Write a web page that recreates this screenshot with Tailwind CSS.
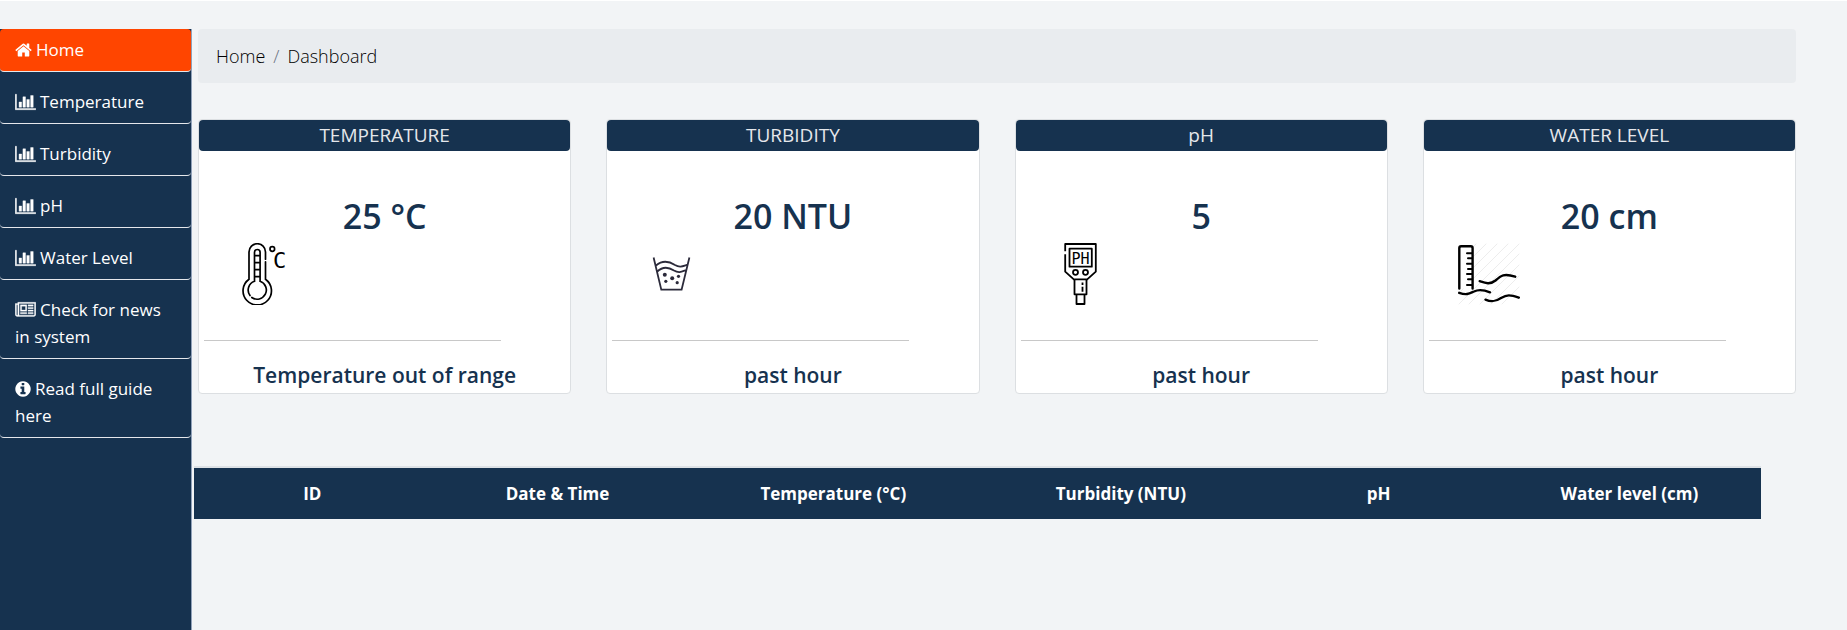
<!DOCTYPE html>
<html lang="en">
<head>
<meta charset="utf-8">
<meta name="viewport" content="width=device-width, initial-scale=1">
<title>Dashboard</title>
<script src="https://cdn.jsdelivr.net/npm/@tailwindcss/browser@4"></script>
</head>
<body class="min-h-screen flex flex-col border-t border-white bg-[#f2f4f6] pt-7 font-['Open_Sans',sans-serif] text-[17px]">

<svg class="hidden" aria-hidden="true">
  <symbol id="bars" viewBox="0 0 2048 1792"><path stroke="currentColor" stroke-width="40" d="M640 896v512h-256v-512h256zm384-512v1024h-256v-1024h256zm1024 1152v128h-2048v-1536h128v1408h1920zm-640-896v768h-256v-768h256zm384-384v1152h-256v-1152h256z"/></symbol>
</svg>

<div class="flex flex-1">
  <nav class="w-48 shrink-0 border-r border-slate-400 bg-[#16324f] text-white" aria-label="Main">
    <ul class="flex flex-col gap-[9px] leading-[27px]">
      <li><a href="#" aria-current="page" class="block rounded border-b border-gray-200 bg-[#ff4500] pt-[7px] pb-2 pl-[15px] pr-3"><svg class="mr-1 mb-0.5 inline h-[18px] w-[17px] align-text-bottom fill-current" viewBox="0 0 1664 1792" aria-hidden="true"><path d="M1408 992v480q0 26-19 45t-45 19h-384v-384h-256v384h-384q-26 0-45-19t-19-45v-480q0-1 .5-3t.5-3l575-474 575 474q1 2 1 6zm223-69l-62 74q-8 9-21 11h-3q-13 0-21-7l-692-577-692 577q-12 8-24 7-13-2-21-11l-62-74q-8-10-7-23.500t11-21.500l719-599q32-26 76-26t76 26l244 204v-195q0-14 9-23t23-9h192q14 0 23 9t9 23v408l219 182q10 8 11 21.500t-7 23.500z"/></svg>Home</a></li>
      <li><a href="#" class="block rounded border-b border-gray-200 pt-[7px] pb-2 pl-[15px] pr-3"><svg class="mr-1 mb-0.5 inline h-[18px] w-[21px] align-text-bottom fill-current" aria-hidden="true"><use href="#bars"/></svg>Temperature</a></li>
      <li><a href="#" class="block rounded border-b border-gray-200 pt-[7px] pb-2 pl-[15px] pr-3"><svg class="mr-1 mb-0.5 inline h-[18px] w-[21px] align-text-bottom fill-current" aria-hidden="true"><use href="#bars"/></svg>Turbidity</a></li>
      <li><a href="#" class="block rounded border-b border-gray-200 pt-[7px] pb-2 pl-[15px] pr-3"><svg class="mr-1 mb-0.5 inline h-[18px] w-[21px] align-text-bottom fill-current" aria-hidden="true"><use href="#bars"/></svg>pH</a></li>
      <li><a href="#" class="block rounded border-b border-gray-200 pt-[7px] pb-2 pl-[15px] pr-3"><svg class="mr-1 mb-0.5 inline h-[18px] w-[21px] align-text-bottom fill-current" aria-hidden="true"><use href="#bars"/></svg>Water Level</a></li>
      <li><a href="#" class="block rounded border-b border-gray-200 pt-[7px] pb-2 pl-[15px] pr-3"><svg class="mr-1 mb-0.5 inline h-[18px] w-[21px] align-text-bottom fill-current" viewBox="0 0 2048 1792" aria-hidden="true"><path stroke="currentColor" stroke-width="30" d="M1024 512h-384v384h384v-384zm128 640v128h-640v-128h640zm0-768v640h-640v-640h640zm640 768v128h-512v-128h512zm0-256v128h-512v-128h512zm0-256v128h-512v-128h512zm0-256v128h-512v-128h512zm-1536 960v-960h-128v960q0 26 19 45t45 19 45-19 19-45zm1664 0v-1088h-1536v1088q0 33-11 64h1483q26 0 45-19t19-45zm128-1216v1216q0 80-56 136t-136 56h-1664q-80 0-136-56t-56-136v-1088h256v-128h1792z"/></svg>Check for news in system</a></li>
      <li><a href="#" class="block rounded border-b border-gray-200 pt-[7px] pb-2 pl-[15px] pr-3"><svg class="mr-1 mb-0.5 inline h-[18px] w-4 align-text-bottom fill-current" viewBox="0 0 1536 1792" aria-hidden="true"><path d="M1024 1376v-160q0-14-9-23t-23-9h-96v-512q0-14-9-23t-23-9h-320q-14 0-23 9t-9 23v160q0 14 9 23t23 9h96v320h-96q-14 0-23 9t-9 23v160q0 14 9 23t23 9h448q14 0 23-9t9-23zm-128-896v-160q0-14-9-23t-23-9h-192q-14 0-23 9t-9 23v160q0 14 9 23t23 9h192q14 0 23-9t9-23zm640 416q0 209-103 385.500t-279.500 279.500-385.500 103-385.500-103-279.500-279.500-103-385.500 103-385.500 279.500-279.500 385.500-103 385.500 103 279.500 279.500 103 385.500z"/></svg>Read full guide here</a></li>
    </ul>
  </nav>

  <main class="min-w-0 flex-1 pl-0.5 pr-[51px]">
    <nav class="ml-1 rounded bg-[#e9ecef] px-[18px] py-[13px] text-[18px] font-light leading-7" aria-label="Breadcrumb">
      <ol class="flex gap-2 text-black">
        <li><a href="#">Home</a></li>
        <li class="text-gray-500" aria-hidden="true">/</li>
        <li><a href="#">Dashboard</a></li>
      </ol>
    </nav>

    <div class="ml-1 mt-9 grid grid-cols-4 gap-[35px] text-center text-[#16324f]">
      <section class="rounded border border-[#dcdfe2] bg-white">
        <h2 class="rounded bg-[#16324f] text-[19px] leading-[31px] text-gray-200">TEMPERATURE</h2>
        <p class="mt-[45px] text-[34px] font-semibold leading-10">25 °C</p>
        <svg class="ml-[34px] mt-[7px] size-[62px] fill-none stroke-black" viewBox="0 0 62 62" stroke-width="1.700" stroke-linecap="round" role="img" aria-label="Thermometer">
          <path d="M32.500 16.200V9a8.200 8.200 0 0 0-16.500 0v27.200a14.200 14.200 0 1 0 16.500 0V18.800"/>
          <path d="M17 52.500a9.200 9.200 0 0 1 4.500-14.200V9.300a2.800 2.800 0 0 1 5.600 0v29a9.200 9.200 0 1 1-8.300 16.200M21.500 12.600h5.600M21.500 19.600h5.600M21.500 26.600h5.600M21.500 33.600h5.600"/>
          <circle cx="39.300" cy="6" r="2.300"/>
          <text x="40" y="25" class="fill-black stroke-none font-['DejaVu_Sans_Mono',monospace] text-[22px]">C</text>
        </svg>
        <hr class="ml-[5px] mt-[35px] w-4/5 border-[#c8c8c8]">
        <p class="mb-1 mt-5 text-[21px] font-semibold leading-7">Temperature out of range</p>
      </section>

      <section class="rounded border border-[#dcdfe2] bg-white">
        <h2 class="rounded bg-[#16324f] text-[19px] leading-[31px] text-gray-200">TURBIDITY</h2>
        <p class="mt-[45px] text-[34px] font-semibold leading-10">20 NTU</p>
        <svg class="ml-[34px] mt-[7px] size-[62px] fill-none stroke-[#2b2a3a]" viewBox="0 0 62 62" stroke-width="1.800" role="img" aria-label="Glass of cloudy water">
          <path d="M12.600 14.500L20.300 46.700H40.600L48.400 14.500M15 22.500C22 16.500 28 18.200 34 22C39 25 42 23 47 21.500M16.300 28.500C22 23 28 24.300 33 27.500C38 30.500 41 28.500 45.500 27"/>
          <g class="fill-[#2b2a3a] stroke-none"><circle cx="23.800" cy="31.700" r="2"/><circle cx="31.200" cy="35.300" r="2"/><circle cx="37.500" cy="33.300" r="1.600"/><circle cx="24.800" cy="38.300" r="1.600"/><circle cx="36.200" cy="39.700" r="1.600"/></g>
        </svg>
        <hr class="ml-[5px] mt-[35px] w-4/5 border-[#c8c8c8]">
        <p class="mb-1 mt-5 text-[21px] font-semibold leading-7">past hour</p>
      </section>

      <section class="rounded border border-[#dcdfe2] bg-white">
        <h2 class="rounded bg-[#16324f] text-[19px] leading-[31px] text-gray-200">pH</h2>
        <p class="mt-[45px] text-[34px] font-semibold leading-10">5</p>
        <svg class="ml-[34px] mt-[7px] size-[62px] fill-none stroke-black" viewBox="0 0 62 62" stroke-width="1.800" stroke-linejoin="round" role="img" aria-label="pH meter">
          <path d="M15.200 8.300V1H45.800V28.700L37.200 36.300H23.800L15.200 28.700V11.300"/>
          <rect x="19.500" y="5.700" width="22.300" height="18"/>
          <circle cx="25.500" cy="29.300" r="2.500"/><circle cx="35.500" cy="29.300" r="2.500"/>
          <path d="M24.500 36.300V51.300H36.500V36.300M26.500 51.300V61H34.500V51.300M32.500 39.500V42M32.500 43.700V48.700"/>
          <text x="21.600" y="20.500" class="fill-black stroke-none font-['DejaVu_Sans_Mono',monospace] text-[15px]">PH</text>
        </svg>
        <hr class="ml-[5px] mt-[35px] w-4/5 border-[#c8c8c8]">
        <p class="mb-1 mt-5 text-[21px] font-semibold leading-7">past hour</p>
      </section>

      <section class="rounded border border-[#dcdfe2] bg-white">
        <h2 class="rounded bg-[#16324f] text-[19px] leading-[31px] text-gray-200">WATER LEVEL</h2>
        <p class="mt-[45px] text-[34px] font-semibold leading-10">20 cm</p>
        <svg class="ml-[34px] mt-[7px] size-[62px] fill-none stroke-black" viewBox="0 0 62 62" stroke-width="2.400" stroke-linecap="round" stroke-linejoin="round" role="img" aria-label="Water level gauge">
          <path class="stroke-[#ededed]" stroke-width="1" d="M1 18L18 1M1 28L28 1M1 39L39 1M1 50L50 1M1 61L61 1M11 61L61 11M22 61L61 22M33 61L61 33M44 61L61 44"/>
          <path class="fill-white" d="M1.300 45.500V5q0-1.800 1.800-1.800h9.700q1.800 0 1.800 1.800V45.500"/>
          <path stroke-width="2" d="M9 10.300h5M10 15.300h4M9 20.700h5M10 26h4M9 31h5M10 36.300h4M9 42h5"/>
          <path d="M21.700 38.200C27 40 32 42 37.500 37.500C43 32.500 46 30 57.200 33.700M1.200 49.800C9 52.500 11.500 50.500 16 48.500C21 46 25 46.500 32 49.300M27.500 56.700C34 59.500 38 58.500 43 55C49 51.500 52 51.500 60.800 54.700"/>
        </svg>
        <hr class="ml-[5px] mt-[35px] w-4/5 border-[#c8c8c8]">
        <p class="mb-1 mt-5 text-[21px] font-semibold leading-7">past hour</p>
      </section>
    </div>

    <div class="mt-[72px] pr-[35px]">
      <table class="w-full table-fixed border-t-2 border-[#dee2e6] text-center">
        <thead class="bg-[#16324f] leading-[27px] text-white">
          <tr>
            <th scope="col" class="w-[15.1%] py-3">ID</th>
            <th scope="col" class="w-[16.2%] py-3">Date &amp; Time</th>
            <th scope="col" class="w-[19%] py-3">Temperature (°C)</th>
            <th scope="col" class="w-[17.7%] py-3">Turbidity (NTU)</th>
            <th scope="col" class="w-[15.2%] py-3">pH</th>
            <th scope="col" class="w-[16.8%] py-3">Water level (cm)</th>
          </tr>
        </thead>
      </table>
    </div>
  </main>
</div>
</body>
</html>
